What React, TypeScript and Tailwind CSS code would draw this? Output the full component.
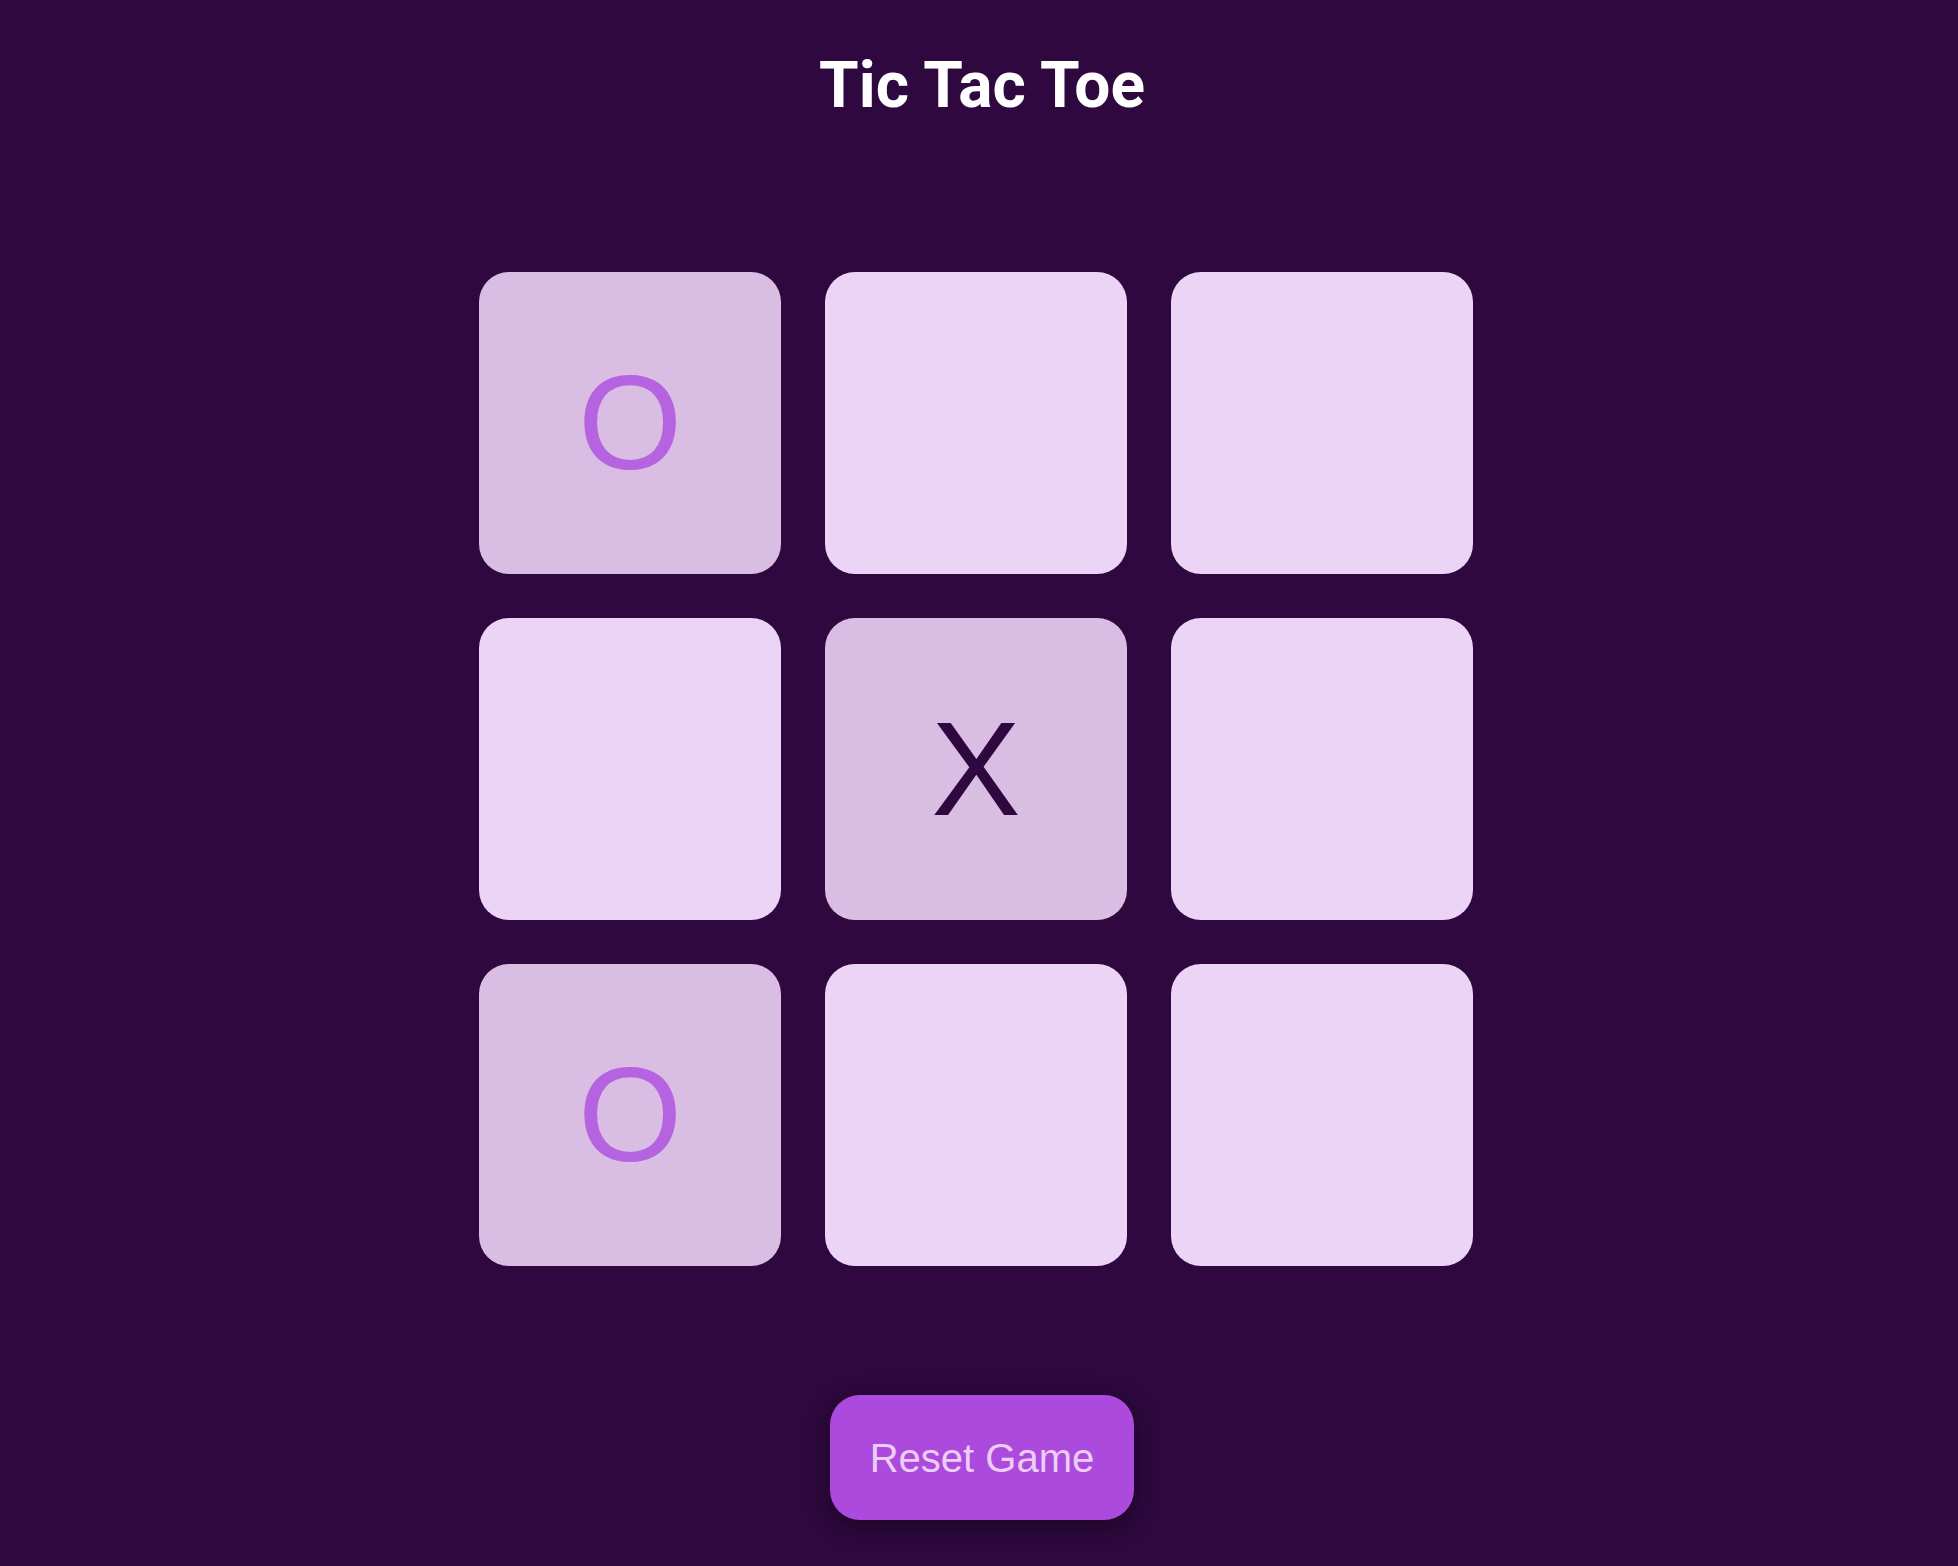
import { useState } from "react";

type Mark = "X" | "O" | null;

const start: Mark[] = ["O", null, null, null, "X", null, "O", null, null];

export default function App() {
  const [board, setBoard] = useState<Mark[]>(start);

  const play = (i: number) => {
    if (board[i]) return;
    const xs = board.filter((m) => m === "X").length;
    const os = board.filter((m) => m === "O").length;
    const next = [...board];
    next[i] = xs < os ? "X" : "O";
    setBoard(next);
  };

  return (
    <div className="min-h-screen bg-[#2e083e] flex flex-col items-center pt-[48px] pl-[6px] font-['Liberation_Sans',Arial,sans-serif]">
      <h1 className="text-[64px] leading-[75px] font-bold text-white font-['Roboto',sans-serif]">
        Tic Tac Toe
      </h1>

      <div className="mt-[149px] mr-[12px] grid grid-cols-[repeat(3,302px)] gap-[44px]">
        {board.map((mark, i) => (
          <button
            key={i}
            onClick={() => play(i)}
            className={`h-[302px] rounded-[30px] flex items-center justify-center text-[134px] leading-none ${
              mark ? "bg-[#d9bde3]" : "bg-[#ebd4f6]"
            } ${mark === "O" ? "text-[#b563e0]" : "text-[#2e083e]"}`}
          >
            {mark}
          </button>
        ))}
      </div>

      <button
        onClick={() => setBoard(Array(9).fill(null))}
        className="mt-[129px] w-[304px] h-[125px] rounded-[30px] bg-[#ad4ade] text-[#eccdf5] text-[40px] shadow-[0_6px_24px_rgba(0,0,0,0.4)]"
      >
        Reset Game
      </button>
    </div>
  );
}
